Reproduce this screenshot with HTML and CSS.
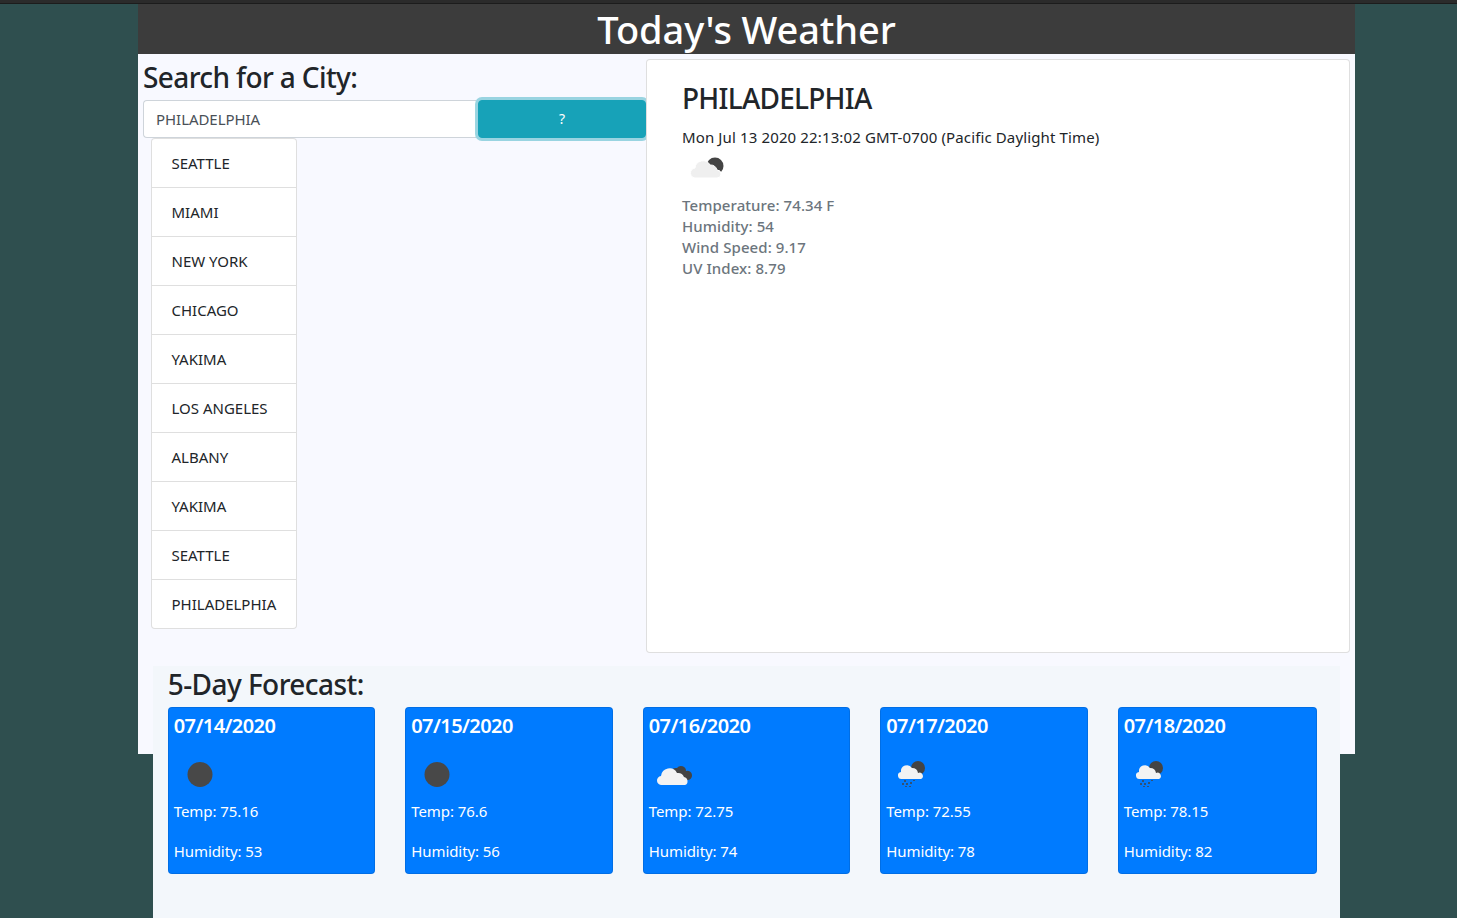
FILE: index.html
```html
<!DOCTYPE html>
<html lang="en">
<head>
<meta charset="utf-8">
<title>Today's Weather</title>
<link rel="stylesheet" href="styles.css">
</head>
<body>
<div class="topline"></div>
<div class="container">
  <header class="banner"><h1>Today's Weather</h1></header>
  <div class="main-row">
    <section class="search">
      <h3 class="search-title">Search for a City:</h3>
      <div class="input-group">
        <input class="city-input" type="text" value="PHILADELPHIA">
        <button class="go-btn" type="button">?</button>
      </div>
      <ul class="history">
        <li>SEATTLE</li>
        <li>MIAMI</li>
        <li>NEW YORK</li>
        <li>CHICAGO</li>
        <li>YAKIMA</li>
        <li>LOS ANGELES</li>
        <li>ALBANY</li>
        <li>YAKIMA</li>
        <li>SEATTLE</li>
        <li>PHILADELPHIA</li>
      </ul>
    </section>
    <section class="today">
      <h3 class="city">PHILADELPHIA</h3>
      <p class="stamp">Mon Jul 13 2020 22:13:02 GMT-0700 (Pacific Daylight Time)</p>
      <svg class="icon" viewBox="0 3 50 50"><circle cx="33" cy="24" r="8.500" fill="#444"/><path d="M14 36a5 5 0 0 1-1-10 8 8 0 0 1 15-3 7 7 0 0 1 7 5 4 4 0 0 1 0 8z" fill="#efefef" stroke="#fff" stroke-width="1"/></svg>
      <div class="stats">
        <div>Temperature: 74.34 F</div>
        <div>Humidity: 54</div>
        <div>Wind Speed: 9.17</div>
        <div>UV Index: 8.79</div>
      </div>
    </section>
  </div>
  <section class="forecast">
    <h3 class="forecast-title">5-Day Forecast:</h3>
    <div class="cards">
      <article class="card">
        <h4>07/14/2020</h4>
        <svg class="icon" viewBox="0 0 50 50"><circle cx="26" cy="24.500" r="12.500" fill="#484848"/></svg>
        <p>Temp: 75.16</p>
        <p>Humidity: 53</p>
      </article>
      <article class="card">
        <h4>07/15/2020</h4>
        <svg class="icon" viewBox="0 0 50 50"><circle cx="26" cy="24.500" r="12.500" fill="#484848"/></svg>
        <p>Temp: 76.6</p>
        <p>Humidity: 56</p>
      </article>
      <article class="card">
        <h4>07/16/2020</h4>
        <svg class="icon" viewBox="0 0 50 50"><path d="M26 30a5 5 0 0 1 2-12 5 5 0 0 1 9 3 4.500 4.500 0 0 1 6 4 4.500 4.500 0 0 1-5 5z" fill="#444"/><path d="M13 35a4.500 4.500 0 0 1-1-9 8.500 8.500 0 0 1 16-3 6.500 6.500 0 0 1 7 4 4.200 4.200 0 0 1 1 8z" fill="#f3f3f3"/></svg>
        <p>Temp: 72.75</p>
        <p>Humidity: 74</p>
      </article>
      <article class="card">
        <h4>07/17/2020</h4>
        <svg class="icon" viewBox="0 0 50 50"><circle cx="32" cy="18" r="7" fill="#444"/><path d="M16 29a3.500 3.500 0 0 1-1-7 6 6 0 0 1 11-4 6 6 0 0 1 6 5 3.200 3.200 0 0 1 3 6z" fill="#f3f3f3"/><path d="M19 30v2M17 33v2M21 33v2M25 32v2M28 30v1M20 36v1M24 36v1" stroke="#444" stroke-width="1.500"/></svg>
        <p>Temp: 72.55</p>
        <p>Humidity: 78</p>
      </article>
      <article class="card narrow">
        <h4>07/18/2020</h4>
        <svg class="icon" viewBox="0 0 50 50"><circle cx="32" cy="18" r="7" fill="#444"/><path d="M16 29a3.500 3.500 0 0 1-1-7 6 6 0 0 1 11-4 6 6 0 0 1 6 5 3.200 3.200 0 0 1 3 6z" fill="#f3f3f3"/><path d="M19 30v2M17 33v2M21 33v2M25 32v2M28 30v1M20 36v1M24 36v1" stroke="#444" stroke-width="1.500"/></svg>
        <p>Temp: 78.15</p>
        <p>Humidity: 82</p>
      </article>
    </div>
  </section>
</div>
</body>
</html>
```
FILE: styles.css
```css
* { box-sizing: border-box; }
html, body { height: 100%; overflow: hidden; }
body {
  margin: 0;
  background: #2f4f4f;
  color: #212529;
  font-family: "Noto Sans", "Liberation Sans", sans-serif;
  font-size: 16px;
  line-height: 1.5;
}
h1, h3, h4, p, ul { margin: 0; padding: 0; }
.topline { height: 4px; background: #2b2b2b; border-bottom: 1px solid #1c1c1c; }
.container { width: 1217px; height: 750px; margin-left: 138px; background: #f8f9ff; }
.banner { height: 50px; background: #3c3c3c; text-align: center; }
.banner h1 { color: #fff; font-size: 38px; font-weight: 500; line-height: 50px; letter-spacing: -.1px; }
.main-row { display: flex; height: 612px; }
.search { width: 508px; padding: 5px 0 0 5px; }
.search-title { font-size: 28px; font-weight: 500; line-height: 37px; letter-spacing: -.62px; margin-bottom: 4px; }
.input-group { display: flex; height: 38px; }
.city-input {
  width: 333px; height: 38px; padding: 6px 12px; border: 1px solid #ced4da; border-right: 0;
  border-radius: 4px 0 0 4px; background: #fff; color: #495057; font: inherit; font-size: 15px; letter-spacing: -.05px;
}
.go-btn {
  width: 168px; height: 38px; margin-left: 2px; padding: 0 0 2px; border: 1px solid #17a2b8; border-radius: 4px; background: #17a2b8; color: #fff;
  font: inherit; font-size: 14px; box-shadow: 0 0 0 3px rgba(58,176,195,.5);
}
.history {
  list-style: none; width: 146px; margin-left: 8px; background: #fff;
  border: 1px solid rgba(0,0,0,.125); border-radius: 4px; font-size: 15px; letter-spacing: 0;
}
.history li { height: 49px; padding: 13px 19.500px 0; line-height: 23px; border-top: 1px solid rgba(0,0,0,.125); }
.history li:first-child { height: 48px; padding-top: 13px; border-top: 0; }
.today { width: 704px; height: 594px; margin-top: 5px; padding: 17px 35px; background: #fff; border: 1px solid rgba(0,0,0,.125); border-radius: 4px; }
.city { font-size: 28px; font-weight: 500; line-height: 42px; letter-spacing: -.75px; margin-bottom: 10px; }
.stamp { font-size: 15px; line-height: 17px; letter-spacing: .13px; margin-bottom: -1px; }
.icon { display: block; width: 50px; height: 50px; }
.stats { color: #6c757d; font-size: 15px; font-weight: 500; line-height: 21px; letter-spacing: .08px; }
.forecast { width: 1187px; height: 252px; margin: 0 0 0 15px; padding: 0 14.750px; background: #f3f7fb; }
.forecast-title { font-size: 28px; font-weight: 500; line-height: 37px; letter-spacing: -.57px; margin-bottom: 4px; }
.cards { display: flex; gap: 30px; }
.card { flex: 0 0 207.5px; height: 167px; padding: 4px 5px; border-radius: 4px; border: 1px solid rgba(0,0,0,.1); background: #007bff; color: #fff; font-size: 15px; letter-spacing: -.08px; }
.card.narrow { flex-basis: 199px; }
.card h4 { font-size: 20px; font-weight: 600; line-height: 28px; margin-bottom: 10px; letter-spacing: -.6px; }
.card .icon { margin-bottom: -1px; }
.card p { line-height: 24px; margin-bottom: 16px; }
```
